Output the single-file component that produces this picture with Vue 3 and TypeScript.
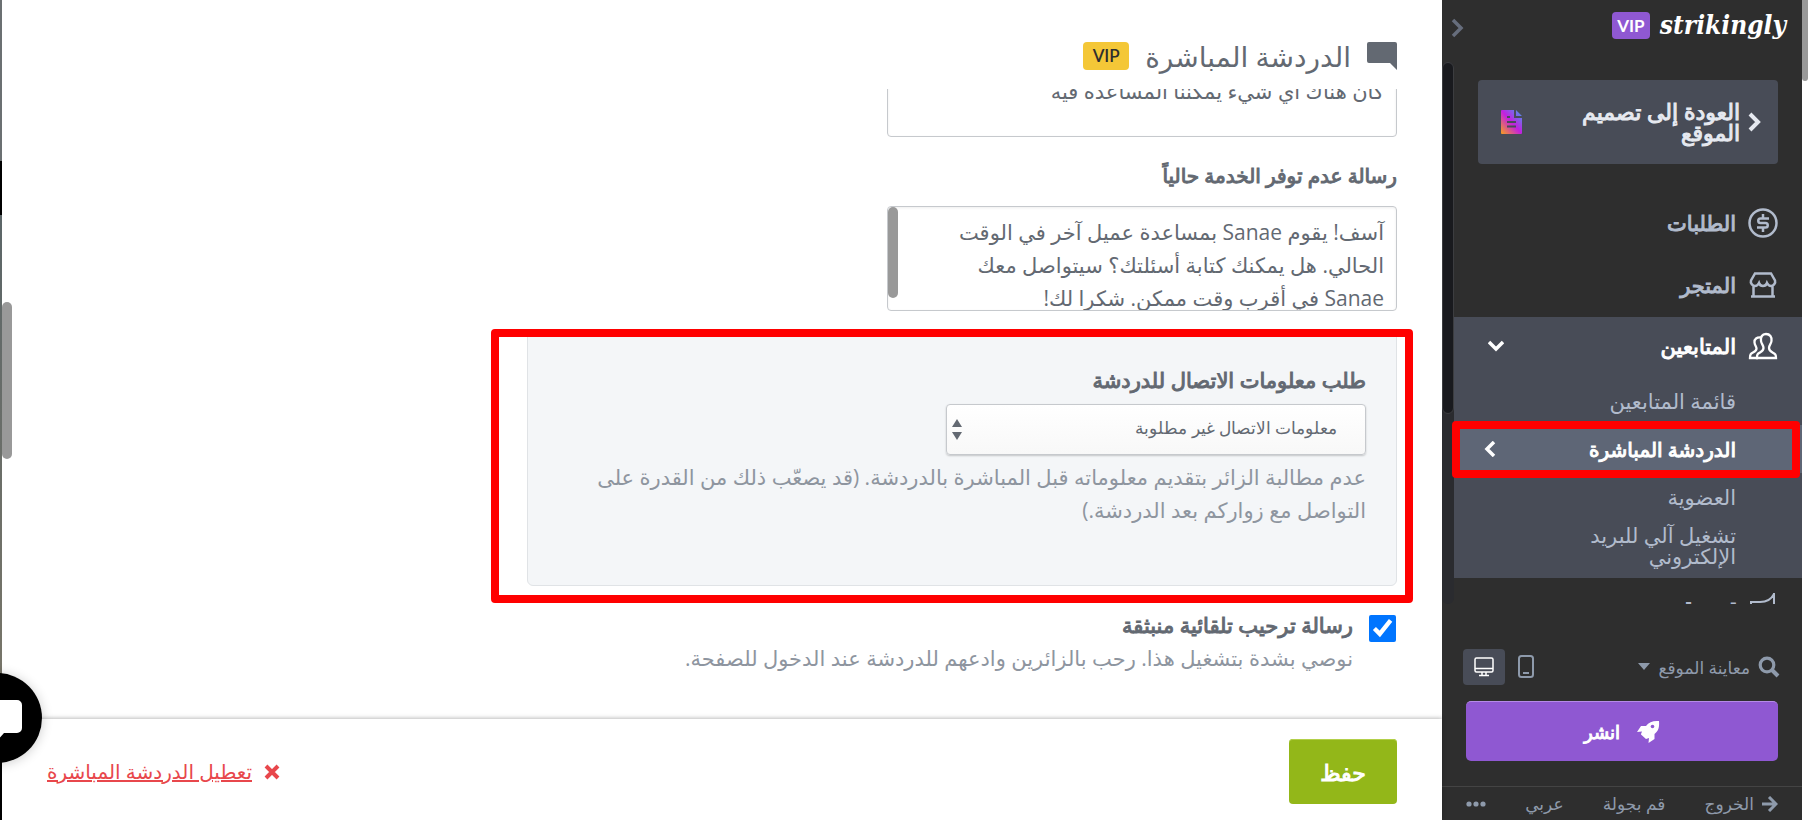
<script setup lang="ts">
import { ref } from 'vue'

interface SubItem {
  label: string
  active?: boolean
}

const subItems: SubItem[] = [
  { label: 'قائمة المتابعين' },
  { label: 'الدردشة المباشرة', active: true },
  { label: 'العضوية' },
  { label: 'تشغيل آلي للبريد الإلكتروني' },
]

const welcome = ref('مرحباً! أخبرنا إذا\nكان هناك أي شيء يمكننا المساعدة فيه')
const offline = ref(
  'آسف! يقوم Sanae بمساعدة عميل آخر في الوقت\nالحالي. هل يمكنك كتابة أسئلتك؟ سيتواصل معك\nSanae في أقرب وقت ممكن. شكرا لك!',
)
const contact = ref('none')
const autoWelcome = ref(true)
</script>

<template>
  <div class="app" dir="rtl" lang="ar">
    <div class="rail"><div class="rail-thumb"></div></div>

    <aside class="sidebar">
      <header class="brand">
        <span class="logo" dir="ltr">strikingly</span>
        <span class="vip vip-purple">VIP</span>
        <button class="collapse" type="button" aria-label="طي القائمة">
          <svg width="14" height="20" viewBox="0 0 14 20"><path d="M3 2l8 8-8 8" fill="none" stroke="#666d7c" stroke-width="3.5" /></svg>
        </button>
      </header>

      <nav class="nav">
        <div class="nav-list">
          <a class="back strong" href="#">
            <svg width="14" height="20" viewBox="0 0 14 20"><path d="M2 2l8 8-8 8" fill="none" stroke="#e6e9f0" stroke-width="4" /></svg>
            <span class="back-label">العودة إلى تصميم الموقع</span>
            <svg width="21" height="24" viewBox="0 0 21 24">
              <defs>
                <linearGradient id="doc" x1="0" y1="1" x2="1" y2="0">
                  <stop offset="0" stop-color="#f8a01c" />
                  <stop offset="0.5" stop-color="#c31fe0" />
                  <stop offset="1" stop-color="#3fa2ee" />
                </linearGradient>
              </defs>
              <path d="M1 0h12v8h8v15a1 1 0 0 1-1 1H1a1 1 0 0 1-1-1V1a1 1 0 0 1 1-1zM15 0l6 6h-6z" fill="url(#doc)" />
              <path d="M6 7h3M6 12h9M6 16.500h9" stroke="#484c57" stroke-width="2" />
            </svg>
          </a>

          <a class="item" href="#">
            <svg width="30" height="30" viewBox="0 0 30 30" fill="none" stroke="currentColor" stroke-width="2.500">
              <circle cx="15" cy="15" r="13.500" />
              <path d="M21 10.500h-8.500a2.250 2.250 0 0 0 0 4.500h5a2.250 2.250 0 0 1 0 4.500H9M15 6v4M15 20v4" />
            </svg>
            <span class="strong">الطلبات</span>
          </a>
          <a class="item" href="#">
            <svg width="30" height="30" viewBox="0 0 30 30" fill="none" stroke="currentColor" stroke-width="2.500">
              <path d="M7 3.500h16l4 7c1 3-2 5.500-4 5.500-2 0-3-1-4-3-1 3-2.500 3-4 3s-3 0-4-3c-1 2-2 3-4 3-2 0-5-2.500-4-5.500zM5.500 15.500V26M24.500 15.500V26M3 26.500h24" />
            </svg>
            <span class="strong">المتجر</span>
          </a>

          <div class="group">
            <a class="item open" href="#">
              <svg width="30" height="30" viewBox="0 0 30 30" fill="none" stroke="currentColor" stroke-width="2.300">
                <path d="M18 3c4 0 6 3 5.500 7-.3 3-2.500 4-2.500 7 0 2 1 3 3.500 4.500S28 23 28 27H9c0-4 .5-4 3-5.500s3.500-2.500 3.500-4.500c0-3-2.200-4-2.500-7-.5-4 1-7 5-7z" />
                <path d="M13 6.500c-4-.5-7 1.500-6.500 5 .3 3 2 4 2 6s-1.500 3-3.500 4-3 1.500-3 5.500h8" />
              </svg>
              <span class="strong">المتابعين</span>
              <svg class="end" width="16" height="12" viewBox="0 0 16 12"><path d="M1 2l7 7 7-7" fill="none" stroke="#fff" stroke-width="3.500" /></svg>
            </a>
            <ul class="subs">
              <li v-for="s in subItems" :key="s.label">
                <a href="#" class="sub" :class="{ active: s.active }">
                  <span class="sub-label">{{ s.label }}</span>
                  <svg v-if="s.active" class="end" width="12" height="16" viewBox="0 0 12 16"><path d="M10 1L3 8l7 7" fill="none" stroke="#fff" stroke-width="3.500" /></svg>
                  <span v-if="s.active" class="mark"></span>
                </a>
              </li>
            </ul>
          </div>

          <a class="item last" href="#">
            <svg width="30" height="30" viewBox="0 0 30 30" fill="none" stroke="currentColor" stroke-width="2">
              <path d="M26 0v24M26 1c-3 6-7 8-14 8H3v9h9c7 0 12 2 14 7" />
            </svg>
            <span class="strong">تسويق</span>
          </a>
        </div>
        <div class="nav-track"><div class="nav-thumb"></div></div>
      </nav>

      <div class="tools">
        <button class="preview" type="button">
          <svg width="22" height="22" viewBox="0 0 22 22" fill="none" stroke="currentColor"><circle cx="9" cy="9" r="6.800" stroke-width="3.200" /><path d="M14 14l6 6" stroke-width="4" /></svg>
          <span>معاينة الموقع</span>
          <svg width="12" height="8" viewBox="0 0 12 8"><path d="M0 0h12L6 7z" fill="currentColor" /></svg>
        </button>
        <div class="devices">
          <button class="device" type="button" aria-label="هاتف">
            <svg width="16" height="24" viewBox="0 0 16 24" fill="none" stroke="#8e9aab" stroke-width="2"><rect x="1" y="1" width="14" height="21" rx="2.500" /><path d="M5 18h6" /></svg>
          </button>
          <button class="device on" type="button" aria-label="حاسوب">
            <svg width="20" height="20" viewBox="0 0 20 20" fill="none" stroke="#fff" stroke-width="1.500"><rect x="1" y="1" width="18" height="14" rx="1.500" /><path d="M1 11.500h18M8 15v3M12 15v3M5 18.500h10" /></svg>
          </button>
        </div>
      </div>

      <button class="publish strong" type="button">
        <svg width="24" height="24" viewBox="0 0 24 24">
          <path d="M23 1c-6-.5-10 1-13 5H5L1 12l5-.5c-.5 1.500-1 2-1 3L10 19l3-1-.5 5 6-4v-5c4-3 5-7 4.500-13z" fill="#fff" />
          <circle cx="16.500" cy="6.500" r="1.800" fill="#8f58d2" />
        </svg>
        <span>انشر</span>
      </button>

      <footer class="links">
        <a class="exit" href="#">
          <svg width="16" height="16" viewBox="0 0 16 16"><path d="M0 8h13M7 1l7 7-7 7" fill="none" stroke="currentColor" stroke-width="3" /></svg>
          <span>الخروج</span>
        </a>
        <a href="#">قم بجولة</a>
        <a href="#">عربي</a>
        <button class="more" type="button" aria-label="المزيد">
          <svg width="20" height="6" viewBox="0 0 20 6" fill="currentColor"><circle cx="3" cy="3" r="2.600" /><circle cx="10" cy="3" r="2.600" /><circle cx="17" cy="3" r="2.600" /></svg>
        </button>
      </footer>
    </aside>

    <main class="main">
      <header class="head">
        <svg width="30" height="28" viewBox="0 0 30 28"><path d="M2 0h26a2 2 0 0 1 2 2v26l-7-7H2a2 2 0 0 1-2-2V2a2 2 0 0 1 2-2z" fill="#636972" /></svg>
        <h1>الدردشة المباشرة</h1>
        <span class="vip vip-yellow">VIP</span>
      </header>

      <form class="form" @submit.prevent>
        <div class="box">
          <textarea v-model="welcome" aria-label="رسالة الترحيب"></textarea>
        </div>
        <label class="label strong" for="offline">رسالة عدم توفر الخدمة حالياً</label>
        <div class="box">
          <textarea id="offline" v-model="offline"></textarea>
          <div class="box-thumb"></div>
        </div>

        <section class="panel">
          <label class="panel-label strong" for="contact">طلب معلومات الاتصال للدردشة</label>
          <div class="select">
            <select id="contact" v-model="contact">
              <option value="none">معلومات الاتصال غير مطلوبة</option>
            </select>
            <svg class="arrows" width="10" height="21" viewBox="0 0 10 21"><path d="M0 8l5-8 5 8zM0 13h10l-5 8z" fill="#636972" /></svg>
          </div>
          <p class="help">عدم مطالبة الزائر بتقديم معلوماته قبل المباشرة بالدردشة. (قد يصعّب ذلك من القدرة على التواصل مع زواركم بعد الدردشة.)</p>
          <span class="mark"></span>
        </section>

        <div class="check">
          <input id="auto" v-model="autoWelcome" type="checkbox" />
          <div>
            <label class="strong" for="auto">رسالة ترحيب تلقائية منبثقة</label>
            <p class="help">نوصي بشدة بتشغيل هذا. رحب بالزائرين وادعهم للدردشة عند الدخول للصفحة.</p>
          </div>
        </div>
      </form>

      <footer class="actions">
        <button class="save strong" type="button">حفظ</button>
        <a class="disable" href="#">
          <svg width="16" height="16" viewBox="0 0 16 16"><path d="M2 2l12 12M14 2L2 14" stroke="#e8474c" stroke-width="4" /></svg>
          <span>تعطيل الدردشة المباشرة</span>
        </a>
      </footer>

      <div class="main-thumb"></div>
    </main>

    <div class="edge"></div>
    <button class="chat" type="button" aria-label="الدردشة">
      <svg width="90" height="90" viewBox="0 0 90 90"><circle cx="45" cy="45" r="45" fill="#000" /><path d="M24 27h41a5 5 0 0 1 5 5v23a5 5 0 0 1-5 5H52l-8 9V60H24z" fill="#fff" /></svg>
    </button>
  </div>
</template>

<style>
html,
body,
#app {
  height: 100%;
}
body {
  overflow: hidden;
}
</style>

<style scoped>
* {
  box-sizing: border-box;
}
.app {
  position: relative;
  display: flex;
  height: 100%;
  overflow: hidden;
  background: #fff;
  color: #636972;
  font-family: 'Open Sans', 'Noto Sans', 'DejaVu Sans', sans-serif;
  font-size: 21px;
}
button {
  padding: 0;
  border: 0;
  background: none;
  color: inherit;
  font: inherit;
  cursor: pointer;
}
a {
  color: inherit;
  text-decoration: none;
}
svg {
  display: block;
  flex: none;
}
p,
h1,
ul {
  margin: 0;
  padding: 0;
}
ul {
  list-style: none;
}
.strong {
  -webkit-text-stroke: 1px currentColor;
}
.rail {
  flex: none;
  width: 6px;
}
.rail-thumb {
  height: 81px;
  border-radius: 0 0 4px 4px;
  background: #999;
}
.sidebar {
  display: flex;
  flex: none;
  flex-direction: column;
  width: 360px;
  background: #2e2e2e;
  color: #b1bbcc;
}
.brand {
  display: flex;
  flex: none;
  align-items: center;
  height: 62px;
  padding: 0 16px 12px 8px;
}
.logo {
  color: #fff;
  font: italic bold 26px/40px 'DejaVu Serif Condensed', 'Liberation Serif', serif;
}
.vip {
  border-radius: 4px;
  font-family: Lato, sans-serif;
  text-align: center;
}
.vip-purple {
  width: 38px;
  margin-right: 10px;
  background: #8f58d2;
  color: #fff;
  font-size: 17px;
  font-weight: 700;
  line-height: 27px;
}
.vip-yellow {
  width: 46px;
  background: #f4c737;
  color: #2e2e2e;
  font-size: 17px;
  font-weight: 600;
  line-height: 28px;
}
.collapse {
  margin: 6px auto 0 0;
}
.nav {
  display: flex;
  flex: 1;
  min-height: 0;
  overflow: hidden;
}
.nav-list {
  flex: 1;
}
.nav-track {
  width: 12px;
  border-radius: 6px;
  background: #2a2b2f;
}
.nav-thumb {
  height: 352px;
  border: 1px solid #3c3d40;
  border-radius: 6px;
  background: #191a1e;
}
.back {
  display: flex;
  align-items: center;
  gap: 8px;
  height: 84px;
  margin: 18px 24px 28px;
  padding: 0 16px 0 23px;
  border-radius: 4px;
  background: #484c57;
  color: #e6e9f0;
  font-size: 22px;
  line-height: 21px;
}
.back-label {
  flex: 1;
  padding-left: 40px;
}
.item {
  display: flex;
  align-items: center;
  gap: 12px;
  height: 62px;
  padding: 0 24px 0 34px;
}
.group {
  margin-top: 1px;
  background: #484c57;
}
.open {
  height: 60px;
  padding-bottom: 2px;
  color: #fff;
}
.last {
  align-items: flex-start;
  padding-top: 15px;
  line-height: 24px;
}
.end {
  margin-right: auto;
}
.sub {
  position: relative;
  display: flex;
  align-items: center;
  min-height: 48px;
  padding: 0 66px 0 30px;
  line-height: 21px;
}
.sub-label {
  max-width: 160px;
}
.active .sub-label {
  white-space: nowrap;
  font-size: 20px;
  -webkit-text-stroke: 1px currentColor;
}
li:last-child .sub {
  padding-bottom: 8px;
  min-height: 57px;
}
.active {
  background: #5e6676;
  color: #fff;
}
.mark {
  position: absolute;
  border: 8px solid #f00;
  border-radius: 4px;
  pointer-events: none;
}
.sub .mark {
  inset: -4px 2px -5px -2px;
}
.tools {
  display: flex;
  align-items: center;
  justify-content: space-between;
  flex: none;
  margin-top: 45px;
  padding: 0 22px 0 21px;
  color: #8e9aab;
  font-size: 17px;
}
.preview,
.exit,
.devices {
  display: flex;
  align-items: center;
  gap: 8px;
}
.device {
  display: grid;
  width: 42px;
  height: 36px;
  place-items: center;
  border-radius: 4px;
}
.on {
  background: #484c57;
}
.devices {
  gap: 0;
}
.publish {
  display: flex;
  flex: none;
  align-items: center;
  justify-content: center;
  gap: 16px;
  height: 60px;
  margin: 16px 24px 25px;
  border-top: 1px solid #b58ae8;
  border-radius: 5px;
  background: #8f58d2;
  color: #fff;
  font-size: 18px;
}
.links {
  display: flex;
  flex: none;
  align-items: center;
  justify-content: space-between;
  height: 34px;
  padding: 0 24px;
  border-top: 1px solid #444;
  color: #8e9aab;
  font-size: 17px;
}
.main {
  position: relative;
  display: flex;
  flex: 1;
  flex-direction: column;
  min-width: 0;
}
.head {
  display: flex;
  flex: none;
  align-items: center;
  gap: 16px;
  height: 89px;
  padding: 22px 45px 0;
}
h1 {
  font-size: 28px;
  font-weight: 400;
  line-height: 40px;
}
.form {
  display: flex;
  flex: 1;
  flex-direction: column;
  justify-content: flex-end;
  min-height: 0;
  overflow: hidden;
  padding: 0 45px 44px;
  line-height: 33px;
}
.box {
  position: relative;
  flex: none;
  width: 510px;
  height: 105px;
}
textarea {
  display: block;
  width: 100%;
  height: 100%;
  padding: 9px 12px 0;
  overflow: hidden;
  border: 1px solid #c6c9cd;
  border-radius: 4px;
  background: #fff;
  box-shadow: inset 0 1px 3px #0001;
  color: inherit;
  font: inherit;
  resize: none;
}
.box-thumb {
  position: absolute;
  top: 1px;
  left: 1px;
  width: 10px;
  height: 91px;
  border-radius: 5px;
  background: #999;
}
.label {
  margin: 22px 0 14px;
  font-size: 20px;
}
.panel {
  position: relative;
  flex: none;
  max-width: 870px;
  height: 255px;
  margin-top: 20px;
  padding: 32px 30px 0;
  border: 1px solid #e0e3e6;
  border-radius: 6px;
  background: #f4f6f8;
}
.panel > .mark {
  inset: -3px -17px -18px -37px;
}
.panel-label {
  display: block;
}
.select {
  position: relative;
  width: 420px;
  margin: 7px 0 6px;
}
select {
  display: block;
  width: 100%;
  height: 51px;
  padding: 0 28px 2px;
  appearance: none;
  border: 1px solid #c6c9cd;
  border-radius: 4px;
  background: linear-gradient(#fff, #f8f8f8);
  box-shadow: 0 1px 2px #0003;
  color: inherit;
  font: 17px/27px 'Liberation Serif', serif;
}
.arrows {
  position: absolute;
  top: 15px;
  left: 6px;
}
.help {
  color: #8e959f;
}
.check {
  display: flex;
  flex: none;
  gap: 16px;
  margin-top: 23px;
}
.check input {
  width: 27px;
  height: 27px;
  margin: 6px 1px 0 0;
  accent-color: #0075ff;
}
.check label {
  display: block;
}
.actions {
  display: flex;
  flex: none;
  align-items: center;
  justify-content: space-between;
  height: 101px;
  padding: 4px 45px 0;
  background: #fff;
  box-shadow: 0 -1px 4px #0004;
}
.save {
  width: 108px;
  height: 65px;
  border-radius: 4px;
  background: #93b719;
  box-shadow: inset 0 1px #b3d04a;
  color: #fff;
  font-size: 22px;
}
.disable {
  display: flex;
  align-items: center;
  gap: 12px;
  color: #e8474c;
  font-size: 20px;
}
.disable span {
  text-decoration: underline;
}
.main-thumb {
  position: absolute;
  top: 302px;
  left: 0;
  width: 10px;
  height: 157px;
  border-radius: 5px;
  background: #999;
}
.edge {
  flex: none;
  width: 2px;
  background: linear-gradient(#6b7072 161px, #000 161px, #000 215px, #5c6668 215px, #777569 673px, #000 763px);
}
.chat {
  position: absolute;
  bottom: 57px;
  left: -48px;
  border-radius: 50%;
  box-shadow: 0 1px 12px #0003;
}
</style>
